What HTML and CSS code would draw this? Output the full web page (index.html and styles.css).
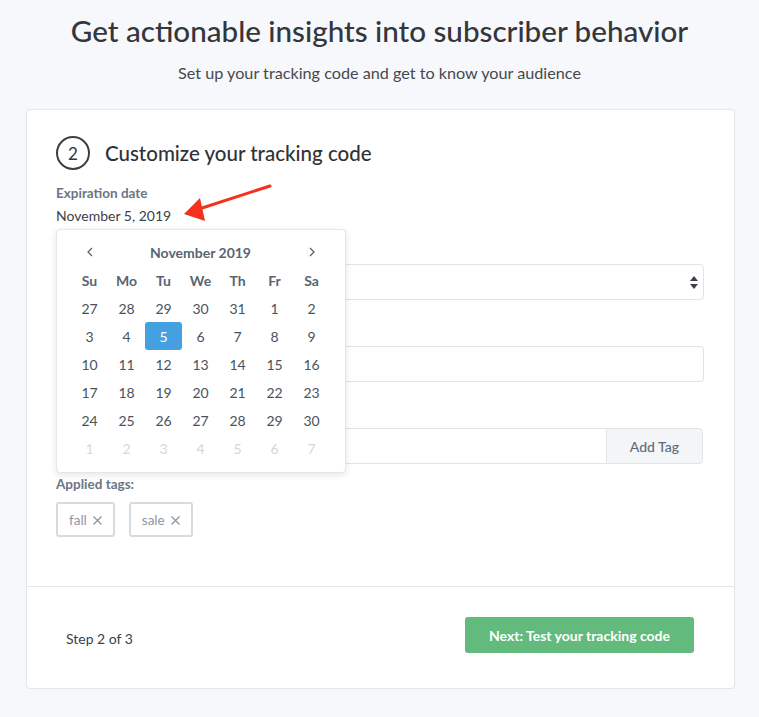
FILE: index.html
```html
<!DOCTYPE html>
<html lang="en">
<head>
<meta charset="utf-8">
<title>Customize your tracking code</title>
<link rel="stylesheet" href="styles.css">
</head>
<body>
<header class="intro">
  <h1 class="intro-title">Get actionable insights into subscriber behavior</h1>
  <p class="intro-sub">Set up your tracking code and get to know your audience</p>
</header>

<section class="card">
  <div class="card-body">
    <div class="step-head">
      <span class="step-num">2</span>
      <h2 class="step-title">Customize your tracking code</h2>
    </div>

    <div class="field">
      <div class="label">Expiration date</div>
      <div class="date-value">November 5, 2019</div>
    </div>

    <div class="field">
      <div class="label"></div>
      <div class="select">
        <svg class="select-arrows" width="8" height="13" viewBox="0 0 8 13"><path d="M4 0 L8 5 L0 5 Z" fill="#3d4148"/><path d="M0 8 L8 8 L4 13 Z" fill="#3d4148"/></svg>
      </div>
    </div>

    <div class="field">
      <div class="label"></div>
      <div class="input"></div>
    </div>

    <div class="field">
      <div class="label"></div>
      <div class="input-group">
        <div class="input grow"></div>
        <div class="addon">Add Tag</div>
      </div>
    </div>

    <div class="label applied">Applied tags:</div>
    <div class="tags">
      <span class="tag">fall <svg class="x" width="9" height="9" viewBox="0 0 9 9"><path d="M0.5 0.5 L8.5 8.5 M8.5 0.5 L0.5 8.5" stroke="#8d96a2" stroke-width="1.3"/></svg></span>
      <span class="tag">sale <svg class="x" width="9" height="9" viewBox="0 0 9 9"><path d="M0.5 0.5 L8.5 8.5 M8.5 0.5 L0.5 8.5" stroke="#8d96a2" stroke-width="1.3"/></svg></span>
    </div>
  </div>

  <div class="card-foot">
    <span class="step-count">Step 2 of 3</span>
    <span class="btn-next">Next: Test your tracking code</span>
  </div>

  <div class="calendar">
    <div class="cal-head">
      <span class="cal-nav"><svg width="6" height="10" viewBox="0 0 6 10"><path d="M5 1 L1 5 L5 9" fill="none" stroke="#5a6472" stroke-width="1.3"/></svg></span>
      <span class="cal-month">November 2019</span>
      <span class="cal-nav"><svg width="6" height="10" viewBox="0 0 6 10"><path d="M1 1 L5 5 L1 9" fill="none" stroke="#5a6472" stroke-width="1.3"/></svg></span>
    </div>
    <div class="cal-grid">
      <span class="wd">Su</span><span class="wd">Mo</span><span class="wd">Tu</span><span class="wd">We</span><span class="wd">Th</span><span class="wd">Fr</span><span class="wd">Sa</span>
      <span class="d">27</span><span class="d">28</span><span class="d">29</span><span class="d">30</span><span class="d">31</span><span class="d">1</span><span class="d">2</span>
      <span class="d">3</span><span class="d">4</span><span class="d sel">5</span><span class="d">6</span><span class="d">7</span><span class="d">8</span><span class="d">9</span>
      <span class="d">10</span><span class="d">11</span><span class="d">12</span><span class="d">13</span><span class="d">14</span><span class="d">15</span><span class="d">16</span>
      <span class="d">17</span><span class="d">18</span><span class="d">19</span><span class="d">20</span><span class="d">21</span><span class="d">22</span><span class="d">23</span>
      <span class="d">24</span><span class="d">25</span><span class="d">26</span><span class="d">27</span><span class="d">28</span><span class="d">29</span><span class="d">30</span>
      <span class="d out">1</span><span class="d out">2</span><span class="d out">3</span><span class="d out">4</span><span class="d out">5</span><span class="d out">6</span><span class="d out">7</span>
    </div>
  </div>

  <svg class="annot-arrow" width="100" height="45" viewBox="0 0 100 45">
    <line x1="93" y1="5" x2="22" y2="28" stroke="#f4311d" stroke-width="3" stroke-linecap="round"/>
    <path d="M7 33 L23 17 L28 40 Z" fill="#f4311d"/>
  </svg>
</section>
</body>
</html>
```

FILE: styles.css
```css
* { box-sizing: border-box; }

body {
  margin: 0;
  background: #f7f8fb;
  font-family: Lato, "Noto Sans", sans-serif;
  color: #3d4148;
}

.intro {
  text-align: center;
  padding-top: 14px;
}

.intro-title {
  margin: 0;
  font-size: 29.6px;
  line-height: 34px;
  font-weight: 500;
  color: #33363b;
}

.intro-sub {
  margin: 15px 0 0;
  font-size: 16.2px;
  line-height: 20px;
  color: #45494f;
}

.card {
  position: relative;
  margin: 26px 24px 0 26px;
  background: #fff;
  border: 1px solid #e3e6ea;
  border-radius: 4px;
  box-shadow: 0 1px 2px rgba(0,0,0,0.04);
}

.card-body {
  padding: 26px 30px 49px 29px;
  border-bottom: 1px solid #e3e6ea;
}

.step-head {
  display: flex;
  align-items: center;
  gap: 15px;
  height: 34px;
}

.step-num {
  width: 34px;
  height: 34px;
  border: 2px solid #3b3f44;
  border-radius: 50%;
  display: flex;
  align-items: center;
  justify-content: center;
  font-size: 17px;
  color: #33363b;
}

.step-title {
  margin: 0;
  font-size: 20.5px;
  font-weight: 500;
  color: #2f3237;
}

.field { margin-top: 11px; }
.field:nth-of-type(2) { margin-top: 14px; }
.field:nth-of-type(4) { margin-top: 19px; }
.field:nth-of-type(5) { margin-top: 19px; }

.label {
  height: 18px;
  font-size: 13.5px;
  line-height: 18px;
  font-weight: 700;
  color: #6b7685;
}

.date-value {
  margin-top: 4px;
  font-size: 14px;
  line-height: 20px;
  color: #3d4148;
}

.field .label + .select,
.field .label + .input,
.field .label + .input-group { margin-top: 9px; }

.select, .input {
  height: 36px;
  border: 1px solid #e1e4e8;
  border-radius: 4px;
  background: #fff;
}

.select {
  display: flex;
  align-items: center;
  justify-content: flex-end;
  padding-right: 5px;
}

.input-group {
  display: flex;
  height: 36px;
}

.input.grow {
  flex: 1;
  border-radius: 4px 0 0 4px;
  border-right: none;
}

.addon {
  width: 97px;
  display: flex;
  align-items: center;
  justify-content: center;
  background: #f4f5f7;
  border: 1px solid #e1e4e8;
  border-radius: 0 4px 4px 0;
  font-size: 14px;
  color: #5f6b7a;
  font-weight: 500;
  margin-right: 1px;
}

.applied { margin-top: 11px; }

.tags {
  display: flex;
  gap: 14px;
  margin-top: 9px;
}

.tag {
  display: inline-flex;
  align-items: center;
  gap: 6px;
  height: 35px;
  padding: 0 11px 0 11px;
  border: 2px solid #d6dbe0;
  border-radius: 3px;
  font-size: 13.5px;
  color: #8d96a2;
}

.tag .x { display: block; margin-top: 1px; }

.card-foot {
  display: flex;
  align-items: center;
  justify-content: space-between;
  padding: 30px 40px 35px 39px;
}

.step-count {
  font-size: 14px;
  color: #3d4148;
  margin-top: 6px;
}

.btn-next {
  display: inline-flex;
  align-items: center;
  justify-content: center;
  width: 229px;
  height: 36px;
  background: #62bb7c;
  border-radius: 3px;
  color: #fff;
  font-size: 14px;
  font-weight: 700;
}

/* calendar popup */
.calendar {
  position: absolute;
  left: 29px;
  top: 119px;
  width: 290px;
  padding: 12px 15px 10px 14px;
  background: #fff;
  border: 1px solid #e3e6ea;
  border-radius: 4px;
  box-shadow: 0 2px 6px rgba(40,50,60,0.12);
}

.cal-head {
  display: grid;
  grid-template-columns: 37px 1fr 37px;
  height: 20px;
  align-items: center;
  margin-bottom: 4px;
}

.cal-nav {
  display: flex;
  justify-content: center;
}

.cal-month {
  text-align: center;
  font-size: 14px;
  font-weight: 700;
  color: #5a6472;
}

.cal-grid {
  display: grid;
  grid-template-columns: repeat(7, 37px);
  grid-auto-rows: 28px;
}

.cal-grid span {
  display: flex;
  align-items: center;
  justify-content: center;
  font-size: 14px;
}

.wd {
  font-weight: 700;
  color: #5a6472;
}

.d { color: #4a5260; }
.d.out { color: #d3d7dc; }

.d.sel {
  background: #44a0e0;
  color: #fff;
  border-radius: 3px;
}

.annot-arrow {
  position: absolute;
  left: 150px;
  top: 71px;
}
```
